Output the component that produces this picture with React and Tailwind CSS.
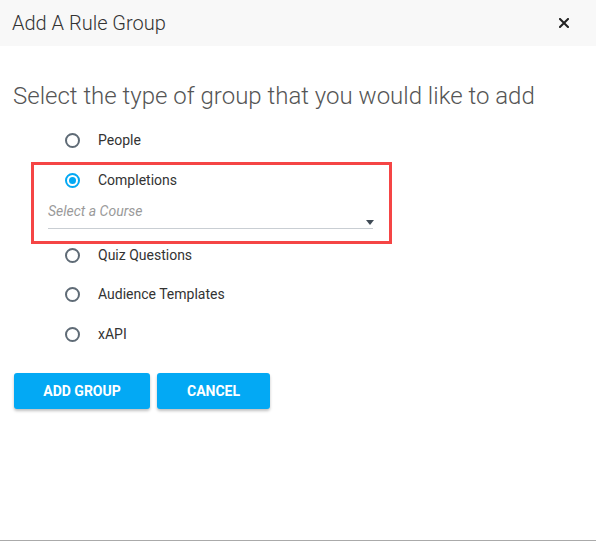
import React, { useState } from 'react'

const Radio = ({ checked }) => (
    <span
        className={
            'w-[15px] h-[15px] rounded-full border-2 flex items-center justify-center shrink-0 ' +
            (checked ? 'border-[#03a9f4]' : 'border-[#5f6b76]')
        }
    >
        {checked && <span className="w-[7px] h-[7px] rounded-full bg-[#03a9f4]" />}
    </span>
)

const Row = ({ label, checked, onClick, className = '' }) => (
    <div className={'flex items-center h-[22px] cursor-pointer ' + className} onClick={onClick}>
        <Radio checked={checked} />
        <span className="ml-[18px] text-[14px] text-[#333]">{label}</span>
    </div>
)

const App = () => {
    const [selected, setSelected] = useState('Completions')

    return (
        <div
            className="w-[596px] h-[541px] bg-white border-b border-[#aaa] flex flex-col"
            style={{ fontFamily: 'Roboto, "Liberation Sans", sans-serif' }}
        >
            <div className="h-[46px] bg-[#f8f8f8] flex items-center justify-between pl-[12px] pr-[27px] shrink-0">
                <h2 className="text-[20px] font-light text-[#333] leading-none">Add A Rule Group</h2>
                <button className="text-[#222]">
                    <svg width="10" height="10" viewBox="0 0 10 10">
                        <path d="M1 1L9 9M9 1L1 9" stroke="#222" strokeWidth="2" strokeLinecap="square" />
                    </svg>
                </button>
            </div>

            <h1 className="mt-[34px] ml-[13px] text-[24px] leading-[32px] font-light text-[#555]">
                Select the type of group that you would like to add
            </h1>

            <div className="mt-[17px] flex flex-col">
                <Row
                    label="People"
                    checked={selected === 'People'}
                    onClick={() => setSelected('People')}
                    className="ml-[65px]"
                />

                <div className="mt-[11px] ml-[31px] w-[361px] h-[82px] border-[3px] border-[#f54545] flex flex-col">
                    <Row
                        label="Completions"
                        checked={selected === 'Completions'}
                        onClick={() => setSelected('Completions')}
                        className="ml-[31px] mt-[4px]"
                    />
                    <div className="ml-[14px] mr-[16px] mt-[10px] h-[28px] border-b border-[#c9ced3] relative">
                        <span className="text-[14px] italic text-[#9a9a9a] leading-[20px] block">Select a Course</span>
                        <span className="absolute right-[-1px] top-[19px] w-0 h-0 border-l-[4px] border-r-[4px] border-t-[5px] border-l-transparent border-r-transparent border-t-[#3f4a55]" />
                    </div>
                </div>

                <div className="ml-[65px] flex flex-col gap-[17px]">
                    <Row label="Quiz Questions" checked={selected === 'Quiz Questions'} onClick={() => setSelected('Quiz Questions')} />
                    <Row label="Audience Templates" checked={selected === 'Audience Templates'} onClick={() => setSelected('Audience Templates')} />
                    <Row label="xAPI" checked={selected === 'xAPI'} onClick={() => setSelected('xAPI')} className="mt-[1px]" />
                </div>
            </div>

            <div className="mt-[28px] ml-[14px] flex gap-[7px]">
                <button className="w-[136px] h-[36px] rounded-[3px] bg-[#03a9f4] text-white text-[14px] font-bold uppercase shadow-[0_2px_3px_rgba(0,0,0,0.25)]">
                    Add Group
                </button>
                <button className="w-[113px] h-[36px] rounded-[3px] bg-[#03a9f4] text-white text-[14px] font-bold uppercase shadow-[0_2px_3px_rgba(0,0,0,0.25)]">
                    Cancel
                </button>
            </div>
        </div>
    )
}

export default App
